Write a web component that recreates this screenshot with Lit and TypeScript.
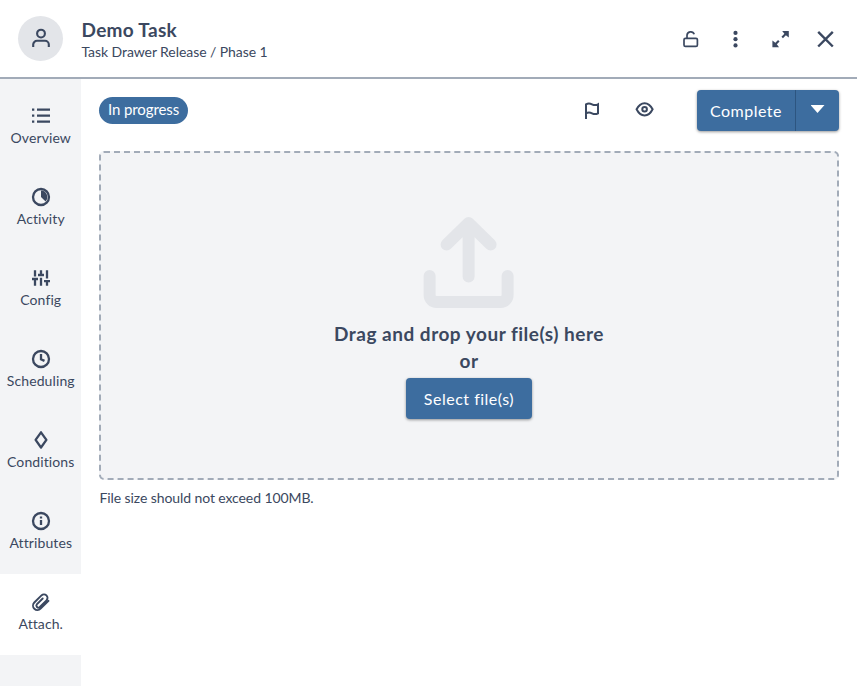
import { LitElement, html, css, svg, TemplateResult } from "lit";
import { customElement, property } from "lit/decorators.js";

const icons: Record<string, TemplateResult> = {
  user: svg`<circle cx="9" cy="4.6" r="3.9"/><path d="M1.2 18v-2.4a3.8 3.8 0 0 1 3.8-3.8h8a3.8 3.8 0 0 1 3.8 3.8V18"/>`,
  lock: svg`<rect x="2" y="8.300" width="13.400" height="8" rx="1.4"/><path d="M5 8.300V5.500a3.700 3.700 0 0 1 7.200-1.200"/>`,
  more: svg`<g fill="currentColor" stroke="none"><circle cx="8.500" cy="2.9" r="2.1"/><circle cx="8.500" cy="9.200" r="2.1"/><circle cx="8.500" cy="15.4" r="2.1"/></g>`,
  expand: svg`<path d="M10.2 7.4 14.6 3M6.8 10.8 2.4 15.2"/><path fill="currentColor" stroke="none" d="M10.200 1h6.600v6.600L14.200 5.600 12.200 3.600ZM.4 10.600v6.600h6.600L5 14.600 3 12.600Z"/>`,
  close: svg`<path stroke-width="2.400" d="M1.200 1.900l14.600 14.600M15.800 1.900l-14.600 14.600"/>`,
  list: svg`<path d="M5 2.700H18M5 8.700H18M5 14.700H18M0 2.700h2.300M0 8.700h2.300M0 14.700h2.300"/>`,
  activity: svg`<circle cx="9" cy="9" r="8"/><path fill="currentColor" stroke="none" d="M9 2.600a6.500 6.500 0 0 1 4.600 10.900L9 9Z"/>`,
  config: svg`<path d="M3 1.200v6.200M3 10v6.800M9 1.200v4M9 8.800v8M15 1.200v8.400M15 12.500v4.300M0 10h6M6 6h6M12 12.200h6"/>`,
  clock: svg`<circle cx="9" cy="9" r="8"/><path d="M9 4v5.200l3.500 1.700"/>`,
  diamond: svg`<path stroke-linejoin="round" d="M9 1.300 14.400 8.900 9 16.500 3.600 8.900Z"/>`,
  info: svg`<circle cx="9" cy="9" r="8"/><path d="M9 8v5M9 4.600v2"/>`,
  clip: svg`<path stroke-width="1.900" stroke-linecap="round" d="M16.500 7.800 8.600 15.700a4.400 4.400 0 0 1-6.300-6.200l7.200-7.100a3.500 3.500 0 0 1 5 4.900l-6.900 6.900a2 2 0 0 1-2.800-2.800l5.900-5.900"/>`,
  flag: svg`<path d="M3 18V3.300c2-1.100 4-1 6 0s4 1.100 6 0v9c-2 1.100-4 1-6 0s-4-1-6 0"/>`,
  eye: svg`<path d="M.6 8.300c4-8.200 12-8.200 16 0-4 8.200-12 8.200-16 0Z"/><circle cx="8.600" cy="8.300" r="2.300"/>`,
  upload: svg`<g stroke-linecap="round" stroke-linejoin="round"><path d="M44.600 59V5.500M22.600 27 44.600 5.500l22 21.500"/><path d="M5.600 58.500v19a7 7 0 0 0 7 7h64a7 7 0 0 0 7-7v-19"/></g>`,
};

@customElement("task-icon")
class TaskIcon extends LitElement {
  @property() name = "";
  @property({ type: Number }) box = 18;
  static styles = css`
    :host { display: block; width: 18px; height: 18px; }
    svg { display: block; width: 100%; height: 100%; overflow: visible; fill: none; stroke: currentColor; stroke-width: var(--stroke, 2.1); }
  `;
  render() {
    return html`<svg viewBox="0 0 ${this.box} ${this.box}" aria-hidden="true">${icons[this.name]}</svg>`;
  }
}

const tabs = [
  ["list", "Overview"],
  ["activity", "Activity"],
  ["config", "Config"],
  ["clock", "Scheduling"],
  ["diamond", "Conditions"],
  ["info", "Attributes"],
  ["clip", "Attach."],
];

@customElement("app-root")
class AppRoot extends LitElement {
  static styles = css`
    :host { display: flex; flex-direction: column; height: 100vh; background: #fff; color: #3b4860; font: 14px/20px Lato, sans-serif; font-variant-ligatures: none; }
    * { box-sizing: border-box; }
    header { display: flex; align-items: center; flex: none; height: 79px; padding: 0 22px 0 18px; border-bottom: 2px solid #a2abb8; }
    .avatar { display: grid; place-items: center; width: 45px; height: 45px; border-radius: 50%; background: #e3e5e9; }
    .heading { flex: 1; margin-left: 18.500px; padding-top: 4px; }
    h1 { margin: 0; font-size: 19px; line-height: 22px; font-weight: 700; letter-spacing: .3px; }
    .path { line-height: 22px; letter-spacing: -.07px; }
    .tools { display: flex; gap: 27px; padding-top: 1px; }
    .tools .thin { --stroke: 1.700; }
    .avatar task-icon { margin-bottom: 1px; }
    .body { display: flex; flex: 1; min-height: 0; }
    nav { width: 81px; padding-top: 9px; background: #f3f4f6; }
    .tab { display: flex; flex-direction: column; align-items: center; height: 81px; padding-top: 19px; }
    .tab task-icon { --stroke: 2.300; }
    .tab.active { background: #fff; }
    .tab span { margin-top: 3px; padding-left: .5px; white-space: nowrap; letter-spacing: .1px; }
    main { flex: 1; padding: 11px 18px 0; }
    .bar { display: flex; align-items: flex-start; height: 61px; }
    .status { width: 89px; height: 27px; margin-top: 7px; border-radius: 14px; background: #3d6d9f; color: #fff; font-size: 15px; line-height: 25px; letter-spacing: -.1px; text-align: center; }
    .actions { display: flex; flex: 1; justify-content: flex-end; gap: 35px; margin: 11px 43px 0 0; }
    .actions task-icon { --stroke: 2; }
    .btn { display: flex; height: 41px; border-radius: 4px; background: #3d6d9f; color: #fff; font-size: 16px; line-height: 42px; letter-spacing: .5px; box-shadow: 0 1px 3px rgba(0, 0, 0, .4); }
    .split span { width: 98px; text-align: center; }
    .split .menu { display: flex; justify-content: center; width: 44px; padding-top: 15px; border-left: 1px solid #2d5580; }
    .caret { width: 14px; height: 8px; background: #fff; clip-path: polygon(0 0, 100% 0, 50% 100%); }
    .drop { display: flex; flex-direction: column; align-items: center; height: 329px; padding-top: 64px; border: 2px dashed #a2abb8; border-radius: 5px; background: #f3f4f6; }
    .upload { width: 90px; height: 91px; color: #e3e5e9; --stroke: 12; }
    .prompt { margin-top: 12px; font-size: 19px; line-height: 27px; font-weight: 700; letter-spacing: .5px; text-align: center; }
    .select { width: 126px; margin-top: 4px; justify-content: center; }
    .hint { margin-top: 8px; padding-left: .5px; letter-spacing: -.09px; }
  `;
  render() {
    return html`
      <header>
        <div class="avatar"><task-icon name="user"></task-icon></div>
        <div class="heading"><h1>Demo Task</h1><div class="path">Task Drawer Release / Phase 1</div></div>
        <div class="tools">
          <task-icon class="thin" name="lock"></task-icon>
          <task-icon name="more"></task-icon>
          <task-icon name="expand"></task-icon>
          <task-icon name="close"></task-icon>
        </div>
      </header>
      <div class="body">
        <nav>${tabs.map(([icon, label]) => html`
          <div class="tab ${icon === "clip" ? "active" : ""}"><task-icon name=${icon}></task-icon><span>${label}</span></div>`)}
        </nav>
        <main>
          <div class="bar">
            <div class="status">In progress</div>
            <div class="actions"><task-icon name="flag"></task-icon><task-icon name="eye"></task-icon></div>
            <div class="btn split"><span>Complete</span><div class="menu"><i class="caret"></i></div></div>
          </div>
          <section class="drop">
            <task-icon class="upload" name="upload" box="90"></task-icon>
            <div class="prompt">Drag and drop your file(s) here<br>or</div>
            <div class="btn select">Select file(s)</div>
          </section>
          <div class="hint">File size should not exceed 100MB.</div>
        </main>
      </div>`;
  }
}
